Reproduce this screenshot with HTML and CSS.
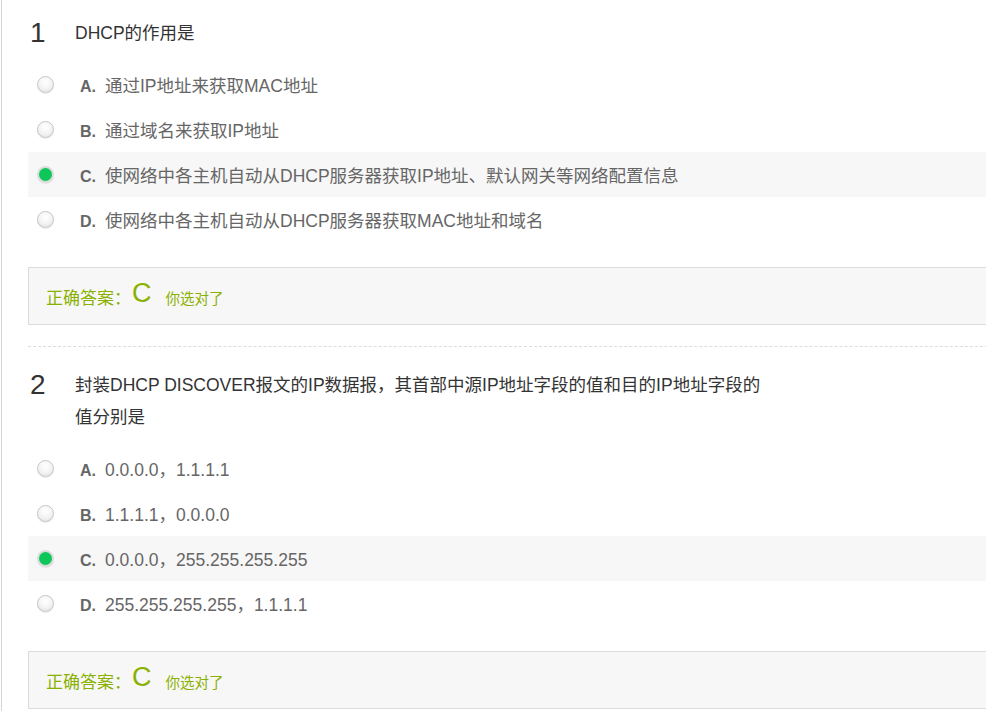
FILE: index.html
```html
<!DOCTYPE html>
<html lang="zh-CN">
<head>
    <meta charset="UTF-8">
    <title>测验</title>
    <link rel="stylesheet" href="styles.css">
</head>
<body>
    <div class="paper">
        <!-- 第1题 -->
        <div class="question">
            <div class="q-title">
                <span class="q-num">1</span>
                <div class="q-text">DHCP的作用是</div>
            </div>
            <ul class="options">
                <li class="option"><span class="radio"></span><span class="opt-text"><b class="opt-label">A.</b>通过IP地址来获取MAC地址</span></li>
                <li class="option"><span class="radio"></span><span class="opt-text"><b class="opt-label">B.</b>通过域名来获取IP地址</span></li>
                <li class="option selected"><span class="radio checked"></span><span class="opt-text"><b class="opt-label">C.</b>使网络中各主机自动从DHCP服务器获取IP地址、默认网关等网络配置信息</span></li>
                <li class="option"><span class="radio"></span><span class="opt-text"><b class="opt-label">D.</b>使网络中各主机自动从DHCP服务器获取MAC地址和域名</span></li>
            </ul>
            <div class="answer">
                <span class="answer-title">正确答案：</span><span class="answer-key">C</span><span class="answer-note">你选对了</span>
            </div>
        </div>

        <!-- 第2题 -->
        <div class="question">
            <div class="q-title">
                <span class="q-num">2</span>
                <div class="q-text">封装DHCP DISCOVER报文的IP数据报，其首部中源IP地址字段的值和目的IP地址字段的值分别是</div>
            </div>
            <ul class="options">
                <li class="option"><span class="radio"></span><span class="opt-text"><b class="opt-label">A.</b>0.0.0.0，1.1.1.1</span></li>
                <li class="option"><span class="radio"></span><span class="opt-text"><b class="opt-label">B.</b>1.1.1.1，0.0.0.0</span></li>
                <li class="option selected"><span class="radio checked"></span><span class="opt-text"><b class="opt-label">C.</b>0.0.0.0，255.255.255.255</span></li>
                <li class="option"><span class="radio"></span><span class="opt-text"><b class="opt-label">D.</b>255.255.255.255，1.1.1.1</span></li>
            </ul>
            <div class="answer">
                <span class="answer-title">正确答案：</span><span class="answer-key">C</span><span class="answer-note">你选对了</span>
            </div>
        </div>
    </div>
</body>
</html>
```

FILE: styles.css
```css
body {
    margin: 0;
    background: #fff;
    font-family: "Liberation Sans", Arial, "Noto Sans CJK SC", sans-serif;
    overflow: hidden;
}

.paper {
    margin-left: 1px;
    width: 1020px;
    border-left: 1px solid #d4d4d4;
    padding-left: 26px;
    min-height: 711px;
}

.question {
    padding-top: 14px;
}

.question + .question {
    margin-top: 21px;
    padding-top: 19px;
    border-top: 1px dashed #dcdcdc;
}

.q-title {
    display: flex;
    align-items: baseline;
    line-height: 32px;
}

.q-num {
    width: 47px;
    padding-left: 2px;
    box-sizing: border-box;
    font-size: 28px;
    color: #333;
    flex-shrink: 0;
    position: relative;
    top: 3px;
}

.q-text {
    width: 692px;
    font-size: 17.5px;
    color: #333;
}

.options {
    list-style: none;
    margin: 13px 0 0;
    padding: 0;
}

.option {
    display: flex;
    align-items: center;
    height: 45px;
    padding-left: 9px;
    font-size: 17.5px;
    color: #666;
}

.option.selected {
    background: #f7f7f7;
}

.radio {
    width: 15px;
    height: 15px;
    border: 1px solid #c6c6c6;
    border-radius: 50%;
    background: radial-gradient(circle at 50% 35%, #fff 0%, #f4f4f4 50%, #dedede 100%);
    margin-right: 26px;
    flex-shrink: 0;
    box-shadow: 0 1px 1px rgba(0,0,0,0.08);
}

.radio.checked {
    width: 13px;
    height: 13px;
    border: 2px solid #dcdcdc;
    background: #0ec75a;
}

.opt-label {
    display: inline-block;
    width: 25px;
    font-size: 16px;
    color: #666;
}

.answer {
    margin-top: 25px;
    height: 56px;
    display: flex;
    align-items: center;
    padding-left: 17px;
    background: #f7f7f7;
    border: 1px solid #dcdcdc;
    color: #8ab000;
}

.answer-title {
    font-size: 17px;
}

.answer-key {
    font-size: 27px;
    margin: -6px 14px 0 1px;
}

.answer-note {
    font-size: 14.5px;
    padding-top: 2px;
}
```
